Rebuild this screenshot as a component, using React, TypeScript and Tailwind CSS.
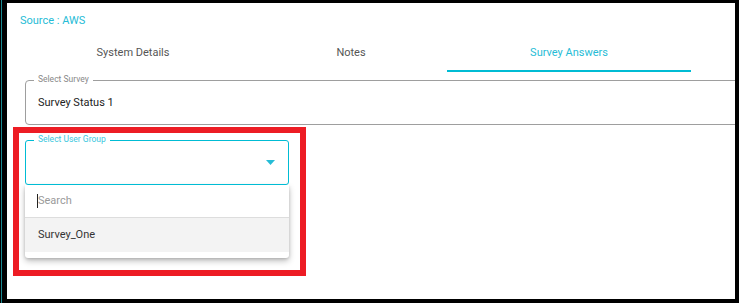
import React from "react";

const font = { fontFamily: "Roboto, 'Noto Sans', sans-serif" };

/* ── Tabs ─────────────────────────────────────────────────── */
const tabs = ["System Details", "Notes", "Survey Answers"];

export default function App() {
  return (
    <div className="w-[739px] h-[303px] bg-black flex overflow-hidden" style={font}>
      {/* left edge strip */}
      <div className="w-[1px] shrink-0" />
      <div className="w-[1px] shrink-0 bg-[#1a8a92]" />
      <div className="w-[5px] shrink-0" />

      <div className="flex-1 mt-[3px] mb-[4px] mr-[4px] bg-white overflow-hidden">
        {/* SOURCE */}
        <p className="pl-[13px] pt-[11px] text-[11px] leading-[14px] text-[#26bcd6]">Source : AWS</p>

        {/* TABS */}
        <div className="flex pl-[17px] mt-[18px] h-[26px]">
          {tabs.map((t, i) => (
            <div key={t} className="w-[218px] shrink-0 flex flex-col items-center">
              <span className={`text-[11px] leading-[14px] ${i === 2 ? "text-[#26bcd6]" : "text-[#555]"}`}>{t}</span>
              {i === 2 && <div className="mt-[10px] h-[2px] w-[244px] bg-[#00bcd4]" />}
            </div>
          ))}
        </div>

        {/* SELECT SURVEY */}
        <div className="ml-[18px] mt-[8px] -mr-[20px] relative h-[45px] border border-[#9e9e9e] rounded-[4px]">
          <span className="absolute -top-[7px] left-[8px] px-[4px] bg-white text-[8.5px] leading-[11px] text-[#888]">Select Survey</span>
          <p className="pl-[12px] pt-[14px] text-[11px] leading-[15px] text-[#222]">Survey Status 1</p>
        </div>

        {/* HIGHLIGHTED USER GROUP */}
        <div className="ml-[6px] mt-[2px] w-[293px] h-[149px] border-[6px] border-[#ed1c24] pt-[7px] pl-[6px]">
          <div className="relative w-[264px] h-[45px] border border-[#00bcd4] rounded-[3px]">
            <span className="absolute -top-[7px] left-[8px] px-[4px] bg-white text-[8.5px] leading-[11px] text-[#3cc8de]">Select User Group</span>
            <svg className="absolute right-[13px] top-[19px]" width="9" height="5" viewBox="0 0 9 5">
              <path d="M0 0 H9 L4.5 5 Z" fill="#26bcd6" />
            </svg>
          </div>

          <div className="w-[264px] bg-white rounded-b-[3px] shadow-[0_3px_6px_rgba(0,0,0,0.25),0_1px_3px_rgba(0,0,0,0.15)] pb-[6px]">
            <div className="h-[33px] flex items-center pl-[12px] border-b border-[#dddddd]">
              <span className="w-[1px] h-[14px] bg-[#222]" />
              <span className="text-[11px] text-[#9a9a9a]">Search</span>
            </div>
            <div className="h-[34px] flex items-center pl-[13px] bg-[#f3f3f3]">
              <span className="text-[11px] text-[#333]">Survey_One</span>
            </div>
          </div>
        </div>
      </div>
    </div>
  );
}
